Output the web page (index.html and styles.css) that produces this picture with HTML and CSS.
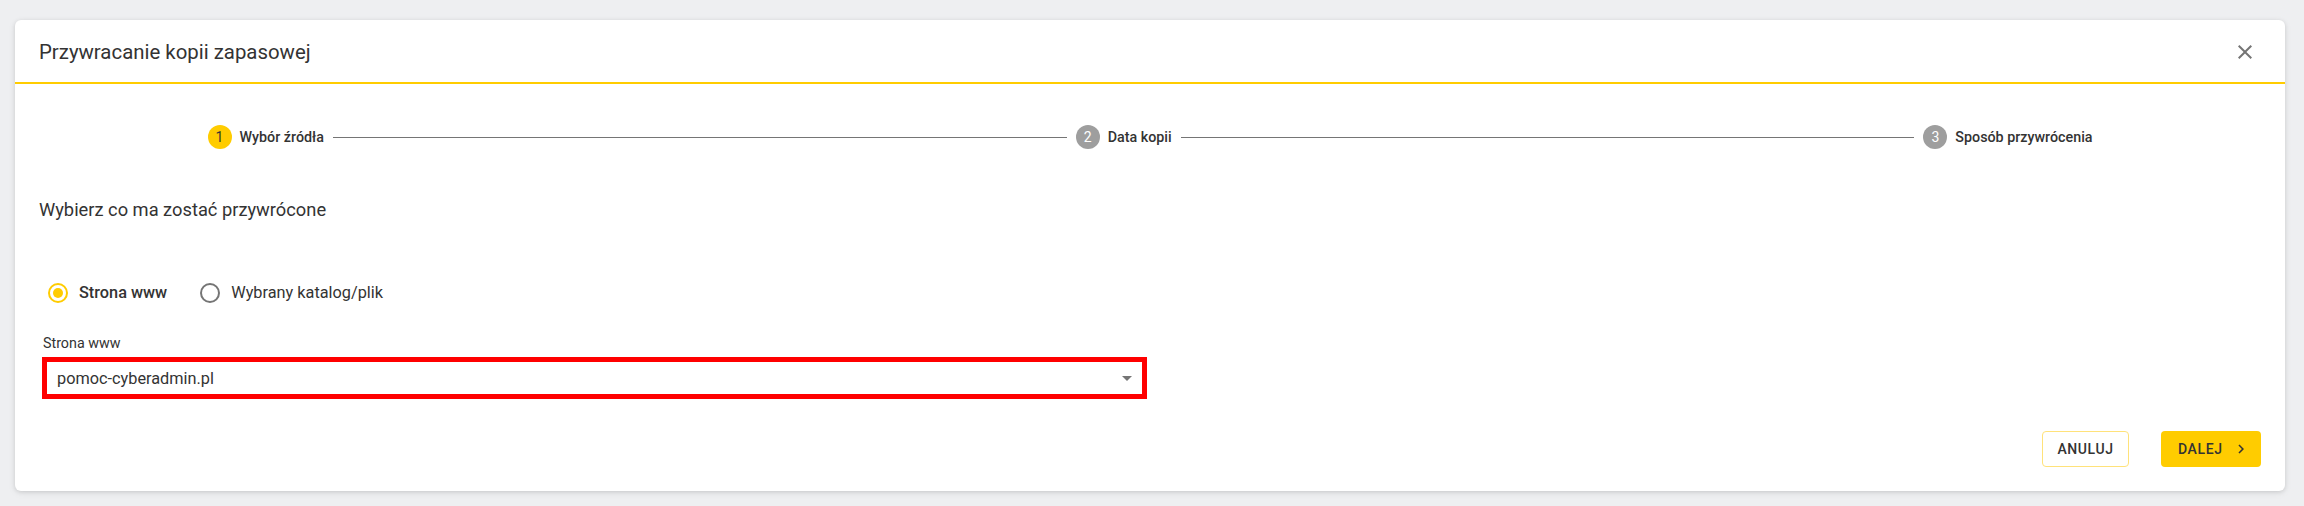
FILE: index.html
```html
<!DOCTYPE html>
<html lang="pl">
<head>
<meta charset="utf-8">
<title>Przywracanie kopii zapasowej</title>
<link rel="stylesheet" href="styles.css">
</head>
<body>
  <div class="dialog">
    <div class="dialog-header">
      <h2 class="dialog-title">Przywracanie kopii zapasowej</h2>
      <button class="close-btn" type="button" aria-label="Zamknij">
        <svg viewBox="0 0 24 24" width="24" height="24"><path d="M19 6.41L17.59 5 12 10.59 6.41 5 5 6.41 10.59 12 5 17.59 6.41 19 12 13.41 17.59 19 19 17.59 13.41 12z"/></svg>
      </button>
    </div>

    <div class="dialog-body">
      <div class="stepper">
        <div class="step step-active">
          <span class="step-icon">1</span>
          <span class="step-label">Wybór źródła</span>
        </div>
        <div class="step-line"></div>
        <div class="step">
          <span class="step-icon">2</span>
          <span class="step-label">Data kopii</span>
        </div>
        <div class="step-line"></div>
        <div class="step">
          <span class="step-icon">3</span>
          <span class="step-label">Sposób przywrócenia</span>
        </div>
      </div>

      <p class="section-title">Wybierz co ma zostać przywrócone</p>

      <div class="radio-group">
        <label class="radio radio-checked">
          <span class="radio-ring"><span class="radio-dot"></span></span>
          <span class="radio-text">Strona www</span>
        </label>
        <label class="radio">
          <span class="radio-ring"></span>
          <span class="radio-text">Wybrany katalog/plik</span>
        </label>
      </div>

      <div class="field">
        <div class="field-label">Strona www</div>
        <div class="select">
          <span class="select-value">pomoc-cyberadmin.pl</span>
          <span class="select-arrow"></span>
        </div>
      </div>

      <div class="actions">
        <button class="btn btn-outline" type="button">Anuluj</button>
        <button class="btn btn-primary" type="button">Dalej
          <svg class="btn-icon" viewBox="0 0 24 24" width="18" height="18"><path d="M10 6L8.59 7.41 13.17 12l-4.58 4.59L10 18l6-6z"/></svg>
        </button>
      </div>
    </div>
  </div>
</body>
</html>
```

FILE: styles.css
```css
* {
  box-sizing: border-box;
}

html, body {
  margin: 0;
  padding: 0;
}

body {
  background: #eeeff1;
  font-family: Roboto, "Noto Sans", "Liberation Sans", sans-serif;
  color: #333333;
  height: 506px;
  overflow: hidden;
}

.dialog {
  margin: 20px 19px 0 15px;
  background: #ffffff;
  border-radius: 6px;
  box-shadow: 0 1px 4px rgba(0, 0, 0, 0.12), 0 2px 8px rgba(0, 0, 0, 0.06);
}

/* header */
.dialog-header {
  height: 64px;
  display: flex;
  align-items: center;
  justify-content: space-between;
  padding: 1px 20px 0 24px;
  border-bottom: 2px solid #ffcc00;
}

.dialog-title {
  margin: 0;
  font-size: 20.4px;
  font-weight: 400;
  line-height: 28px;
  color: #333333;
}

.close-btn {
  width: 40px;
  height: 40px;
  padding: 0;
  border: 0;
  background: transparent;
  display: flex;
  align-items: center;
  justify-content: center;
  cursor: pointer;
}

.close-btn svg {
  fill: #757575;
}

/* body */
.dialog-body {
  padding: 0 24px 24px;
  display: flex;
  flex-direction: column;
}

/* stepper */
.stepper {
  width: 1933px;
  height: 72px;
  margin: 17px auto 0;
  padding: 0 24px;
  display: flex;
  align-items: center;
}

.step {
  display: flex;
  align-items: center;
  flex: none;
}

.step-icon {
  width: 24px;
  height: 24px;
  border-radius: 50%;
  background: #9e9e9e;
  color: #ffffff;
  font-size: 14px;
  line-height: 24px;
  text-align: center;
  margin-right: 8px;
}

.step-active .step-icon {
  background: #ffcc00;
  color: #333333;
}

.step-label {
  font-size: 14.3px;
  font-weight: 500;
  color: #333333;
  white-space: nowrap;
}

.step-line {
  flex: 1 1 auto;
  height: 1px;
  background: #757575;
  margin: 0 9px;
}

/* section */
.section-title {
  margin: 25px 0 0;
  font-size: 18.3px;
  line-height: 24px;
  color: #333333;
}

/* radios */
.radio-group {
  margin-top: 59px;
  padding-left: 9px;
  display: flex;
  align-items: center;
  height: 24px;
}

.radio {
  display: flex;
  align-items: center;
  margin-right: 33px;
  cursor: pointer;
}

.radio-ring {
  width: 20px;
  height: 20px;
  border-radius: 50%;
  border: 2px solid #757575;
  display: flex;
  align-items: center;
  justify-content: center;
  margin-right: 11px;
}

.radio-checked .radio-ring {
  border-color: #ffcc00;
}

.radio-dot {
  width: 10px;
  height: 10px;
  border-radius: 50%;
  background: #ffcc00;
}

.radio-text {
  font-size: 16.3px;
  line-height: 24px;
  color: #333333;
}

.radio-checked .radio-text {
  font-weight: 500;
}

/* select field */
.field {
  margin-top: 30px;
  margin-left: 3px;
  width: 1105px;
}

.field-label {
  font-size: 14.3px;
  line-height: 16px;
  padding-left: 1px;
  color: #333333;
}

.select {
  margin-top: 6px;
  height: 42px;
  border: 5px solid #ff0000;
  display: flex;
  align-items: center;
  justify-content: space-between;
  padding: 1px 10px 0 10px;
}

.select-value {
  font-size: 16.3px;
  line-height: 30px;
  color: #333333;
}

.select-arrow {
  width: 0;
  height: 0;
  border-left: 5px solid transparent;
  border-right: 5px solid transparent;
  border-top: 5px solid #757575;
}

/* actions */
.actions {
  margin-top: 32px;
  display: flex;
  justify-content: flex-end;
  gap: 32px;
}

.btn {
  height: 36px;
  border-radius: 4px;
  font-family: Roboto, "Noto Sans", "Liberation Sans", sans-serif;
  font-size: 14px;
  font-weight: 500;
  letter-spacing: 0.6px;
  text-transform: uppercase;
  color: #333333;
  display: flex;
  align-items: center;
  cursor: pointer;
}

.btn-outline {
  width: 87px;
  justify-content: center;
  background: #ffffff;
  border: 1px solid #ffe27a;
}

.btn-primary {
  width: 100px;
  padding: 0 0 0 17px;
  background: #ffcc00;
  border: 0;
}

.btn-icon {
  fill: #333333;
  margin-left: 9px;
}
```
